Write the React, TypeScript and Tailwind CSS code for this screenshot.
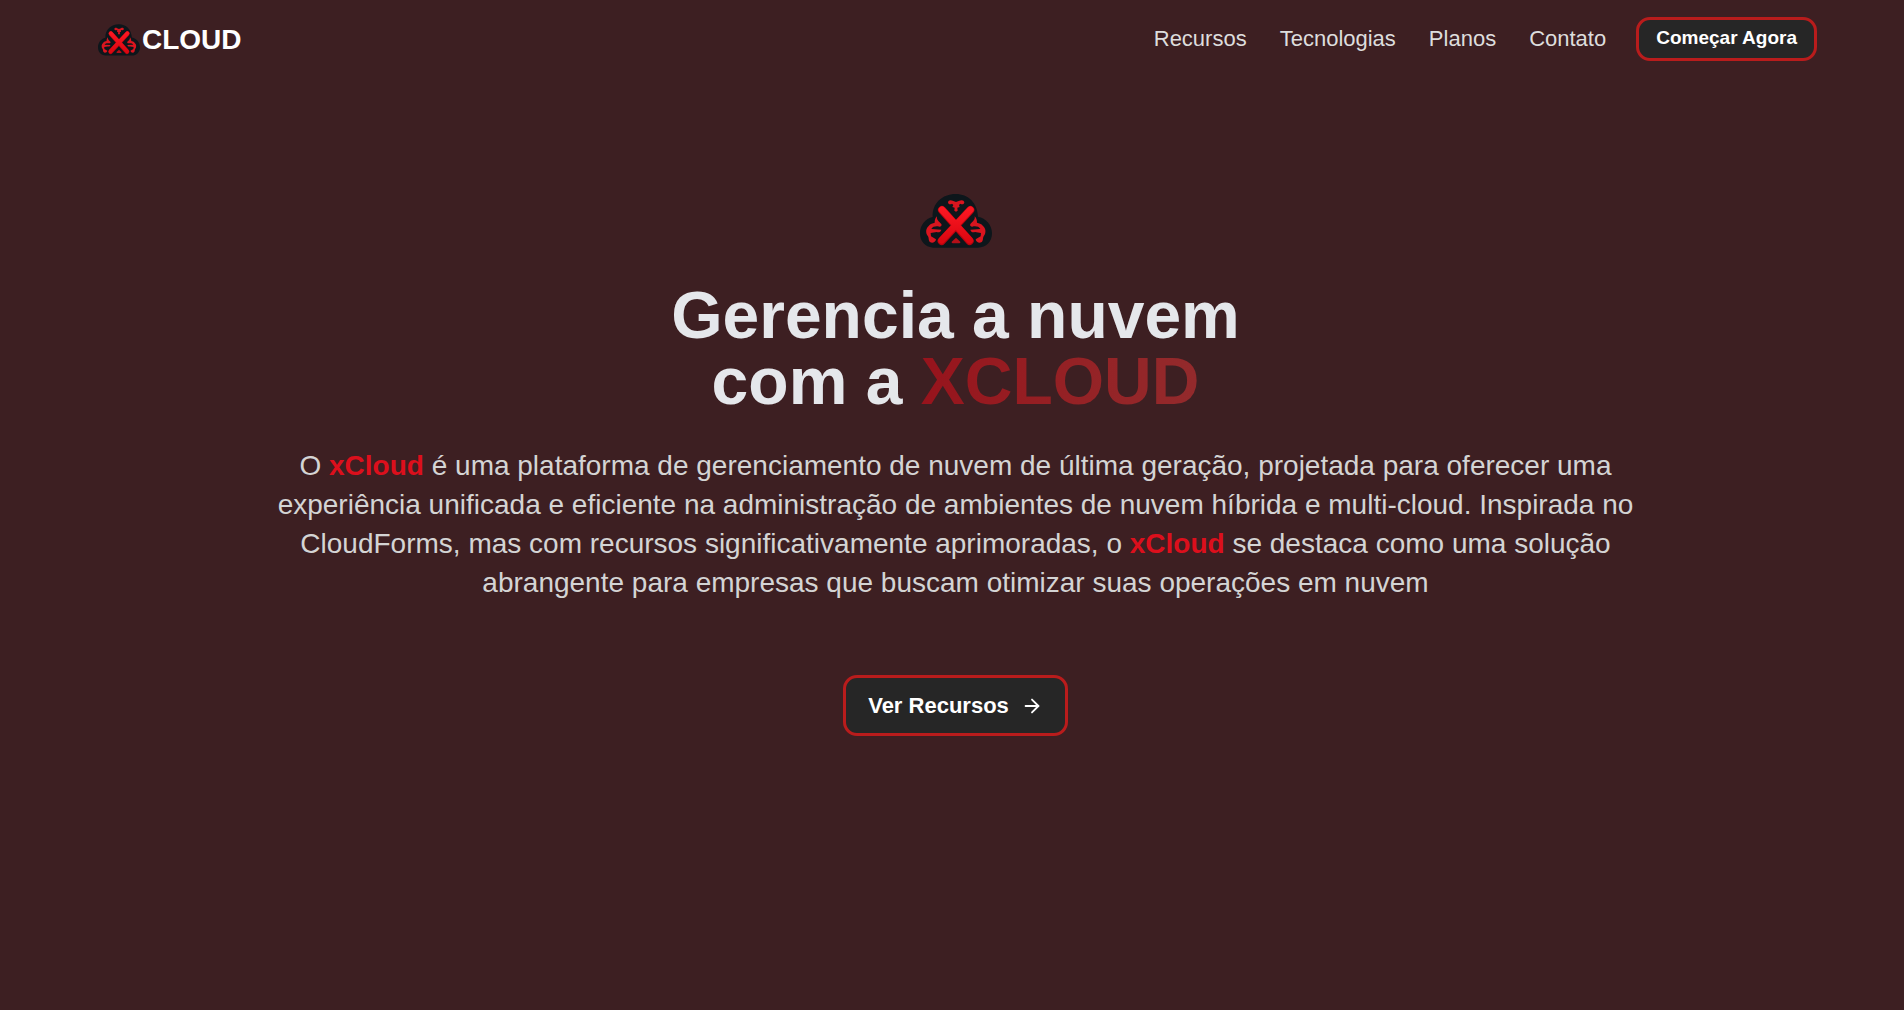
import { ArrowRight } from "lucide-react";

function CloudLogo({ className }: { className: string }) {
  return (
    <svg viewBox="0 0 216 162" className={className} aria-hidden="true">
      <defs>
        <linearGradient id="ember" x1="0" y1="0" x2="0" y2="1">
          <stop offset="0" stopColor="#fb1722" />
          <stop offset="1" stopColor="#dc0711" />
        </linearGradient>
      </defs>
      <path
        fill="#0d161b"
        d="M39 161C14 159 0 141 0 118C0 93 16 74 38 69C36 28 67 0 107 0C145 0 172 26 174 68C198 73 216 92 216 118C216 143 199 161 174 161Z"
      />
      <path
        d="M66 48L149 141M151 48L65 141"
        fill="none"
        stroke="#b6040e"
        strokeWidth="24"
        strokeLinecap="round"
      />
      <path
        d="M66 47L149 139M151 47L65 139"
        fill="none"
        stroke="url(#ember)"
        strokeWidth="20"
        strokeLinecap="round"
      />
      <g fill="#d9151f">
        <path d="M84 25C85 18 92 17 98 20L108 24L118 20C125 17 132 18 133 25C133 31 126 33 121 29L117 33L119 39L112 41L113 50L108 53L103 50L104 41L97 39L100 33L96 29C91 33 84 31 84 25Z" />
        <path d="M51 67C49 77 56 82 64 90C66 94 64 98 58 98C49 96 38 97 34 105L64 107C62 114 57 116 50 114L32 117L33 127L48 136C47 146 33 150 28 142C25 137 27 132 24 127C16 117 17 103 26 96C31 88 38 88 44 86C44 78 46 72 51 67Z" />
        <path d="M164 67C166 77 159 82 151 90C149 94 151 98 157 98C166 96 177 97 181 105L151 107C153 114 158 116 165 114L183 117L182 127L167 136C168 146 182 150 187 142C190 137 188 132 191 127C199 117 198 103 189 96C184 88 177 88 171 86C171 78 169 72 164 67Z" />
        <path fill="#b30f18" d="M108 131L121 143Q122 148 117 148H99Q94 148 95 143Z" />
      </g>
    </svg>
  );
}

const links = [
  { label: "Recursos", href: "#recursos" },
  { label: "Tecnologias", href: "#tecnologias" },
  { label: "Planos", href: "#planos" },
  { label: "Contato", href: "#contato" },
];

export default function App() {
  return (
    <div className="min-h-screen bg-[#3d1f22] pr-[87px] pl-[98px] font-['Liberation_Sans',Arial,sans-serif] text-[#e5e7eb]">
      <header className="flex h-[78px] items-center justify-between">
        <a href="#" className="flex items-center gap-0.5 pt-0.5 text-[28px] leading-8 font-bold text-white">
          <CloudLogo className="h-8 w-[42px]" />
          CLOUD
        </a>
        <div className="flex items-center gap-[30px]">
          <nav className="flex gap-[33px] text-[22px] leading-7 text-[#dddddd]">
            {links.map((link) => (
              <a key={link.label} href={link.href}>
                {link.label}
              </a>
            ))}
          </nav>
          <button className="h-11 rounded-[14px] border-[3px] border-[#b91c1c] bg-[#262626] px-[17px] pb-0.5 text-[19px] font-bold text-white">
            Começar Agora
          </button>
        </div>
      </header>

      <main className="flex flex-col items-center pt-[116px] pr-1 text-center">
        <CloudLogo className="h-[54px] w-[72px]" />
        <h1 className="mt-[34px] text-[66px] leading-none font-bold">
          Gerencia a nuvem
          <br />
          com a{" "}
          <span className="bg-linear-to-r from-[#97131c] to-[#932a2c] bg-clip-text text-transparent">
            XCLOUD
          </span>
        </h1>
        <p className="mt-8 max-w-[1370px] text-[28px] leading-[39px] text-[#d4d4d4]">
          O <strong className="text-[#dc0f1c]">xCloud</strong> é uma plataforma de gerenciamento de
          nuvem de última geração, projetada para oferecer uma experiência unificada e eficiente na
          administração de ambientes de nuvem híbrida e multi-cloud. Inspirada no CloudForms, mas
          com recursos significativamente aprimoradas, o{" "}
          <strong className="text-[#dc0f1c]">xCloud</strong> se destaca como uma solução abrangente
          para empresas que buscam otimizar suas operações em nuvem
        </p>
        <button className="mt-[73px] flex h-[61px] items-center gap-3 rounded-[14px] border-[3px] border-[#b91c1c] bg-[#262626] px-[22px] text-[22px] font-bold text-white">
          Ver Recursos
          <ArrowRight className="size-[22px]" />
        </button>
      </main>
    </div>
  );
}
